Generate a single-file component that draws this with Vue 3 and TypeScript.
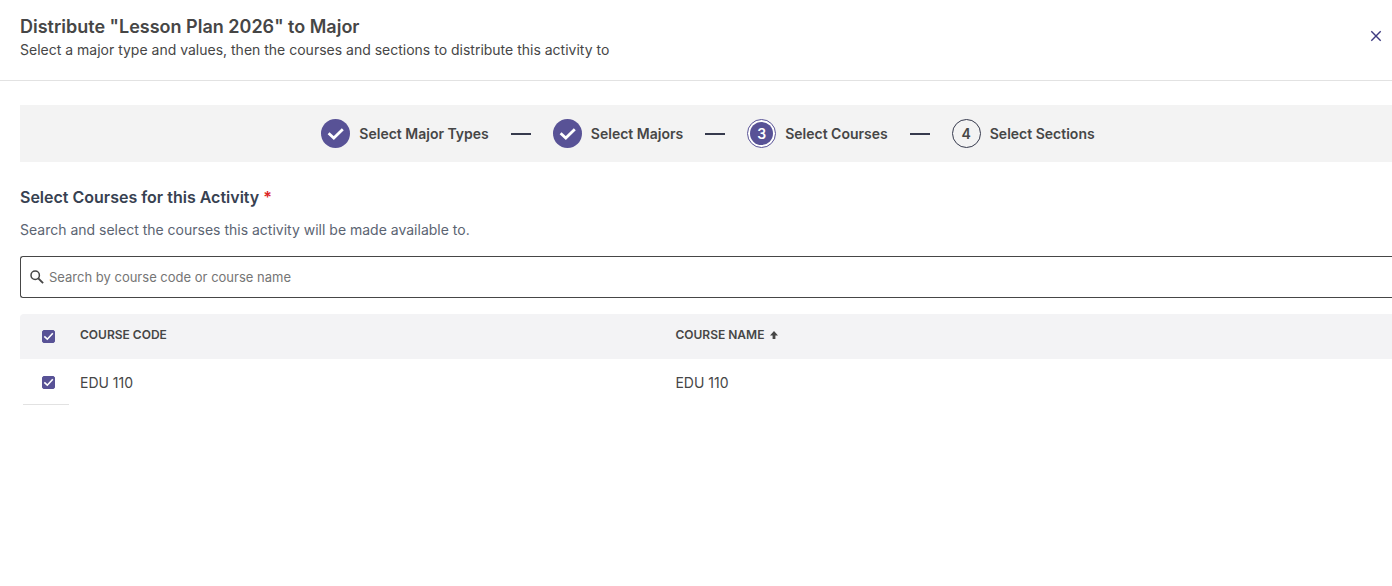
<script setup lang="ts">
import { computed, ref } from 'vue'

type StepState = 'done' | 'current' | 'upcoming'

interface Step {
  label: string
  state: StepState
}

interface Course {
  code: string
  name: string
  selected: boolean
}

const steps: Step[] = [
  { label: 'Select Major Types', state: 'done' },
  { label: 'Select Majors', state: 'done' },
  { label: 'Select Courses', state: 'current' },
  { label: 'Select Sections', state: 'upcoming' },
]

const search = ref('')
const ascending = ref(true)
const courses = ref<Course[]>([{ code: 'EDU 110', name: 'EDU 110', selected: true }])

const visibleCourses = computed(() => {
  const term = search.value.trim().toLowerCase()
  const direction = ascending.value ? 1 : -1
  return courses.value
    .filter((c) => `${c.code} ${c.name}`.toLowerCase().includes(term))
    .sort((a, b) => direction * a.name.localeCompare(b.name))
})

const allSelected = computed({
  get: () => courses.value.every((c) => c.selected),
  set: (value: boolean) => courses.value.forEach((c) => (c.selected = value)),
})
</script>

<template>
  <div class="dialog" role="dialog" aria-labelledby="dialog-title">
    <header class="dialog-header">
      <div>
        <h1 id="dialog-title">Distribute "Lesson Plan 2026" to Major</h1>
        <p>Select a major type and values, then the courses and sections to distribute this activity to</p>
      </div>
      <button class="close" type="button" aria-label="Close">
        <svg viewBox="0 0 12 12" width="12" height="12" aria-hidden="true">
          <path d="M1.3 1.3l9.4 9.4M10.7 1.3l-9.4 9.4" fill="none" stroke="currentColor" stroke-width="1.4" />
        </svg>
      </button>
    </header>

    <main class="content">
      <ol class="stepper">
        <li v-for="(step, index) in steps" :key="step.label" class="step">
          <span class="marker" :class="step.state">
            <svg v-if="step.state === 'done'" viewBox="0 0 29 29" width="29" height="29" aria-hidden="true">
              <path d="M7.6 14.2l5.2 4.8 9-8.8" fill="none" stroke="#fff" stroke-width="2.8" />
            </svg>
            <span v-else class="number">{{ index + 1 }}</span>
          </span>
          <span class="step-label">{{ step.label }}</span>
        </li>
      </ol>

      <h2><label for="course-search">Select Courses for this Activity <span class="required">*</span></label></h2>
      <p class="hint">Search and select the courses this activity will be made available to.</p>

      <div class="search">
        <svg viewBox="0 0 14 14" width="14" height="14" aria-hidden="true">
          <circle cx="5.2" cy="5.2" r="4.2" fill="none" stroke="currentColor" stroke-width="1.5" />
          <path d="M8.3 8.3l4.8 4.8" fill="none" stroke="currentColor" stroke-width="1.9" />
        </svg>
        <input id="course-search" v-model="search" type="text" placeholder="Search by course code or course name" />
      </div>

      <table>
        <thead>
          <tr>
            <th class="select-cell" scope="col">
              <span class="check">
                <input v-model="allSelected" type="checkbox" aria-label="Select all courses" />
                <svg viewBox="0 0 13 13" aria-hidden="true"><path d="M2.3 6.4l3 2.8 5.5-6" /></svg>
              </span>
            </th>
            <th class="code-cell" scope="col">COURSE CODE</th>
            <th scope="col" :aria-sort="ascending ? 'ascending' : 'descending'">
              <button class="sort" type="button" @click="ascending = !ascending">
                COURSE NAME
                <svg :class="{ flipped: !ascending }" viewBox="0 0 8 8" width="8" height="8" aria-hidden="true">
                  <path d="M4 0L8 4.4H5.4V8H2.6V4.4H0z" fill="currentColor" />
                </svg>
              </button>
            </th>
          </tr>
        </thead>
        <tbody>
          <tr v-for="course in visibleCourses" :key="course.code">
            <td class="select-cell">
              <span class="check">
                <input v-model="course.selected" type="checkbox" :aria-label="`Select ${course.code}`" />
                <svg viewBox="0 0 13 13" aria-hidden="true"><path d="M2.3 6.4l3 2.8 5.5-6" /></svg>
              </span>
            </td>
            <td>{{ course.code }}</td>
            <td>{{ course.name }}</td>
          </tr>
        </tbody>
      </table>
    </main>
  </div>
</template>

<style>
body {
  background: #fff;
}
</style>

<style scoped>
.dialog {
  color: #464646;
  font-family: Inter, "Liberation Sans", sans-serif;
  font-size: 14px;
}

h1,
h2,
p,
ol {
  margin: 0;
  padding: 0;
}

button {
  border: 0;
  padding: 0;
  background: none;
  color: inherit;
  font: inherit;
  cursor: pointer;
}

.dialog-header {
  display: flex;
  justify-content: space-between;
  align-items: flex-start;
  padding: 14px 8px 20px 20px;
  border-bottom: 1px solid #e2e2e2;
}

h1 {
  font-size: 18px;
  font-weight: 600;
  line-height: 26px;
}

.dialog-header p {
  line-height: 20px;
}

.close {
  display: grid;
  place-items: center;
  width: 16px;
  height: 16px;
  margin-top: 14px;
  color: #3d3a80;
}

.content {
  padding: 24px 0 24px 20px;
}

.stepper {
  display: flex;
  justify-content: center;
  padding: 14px 0 14px 4px;
  background: #f3f3f3;
  list-style: none;
}

.step {
  display: flex;
  align-items: center;
  font-weight: 600;
}

.step:not(:last-child)::after {
  width: 20px;
  height: 2px;
  margin: 0 22px;
  background: #363a4d;
  content: "";
}

.marker {
  display: grid;
  place-items: center;
  box-sizing: border-box;
  width: 29px;
  height: 29px;
  margin-right: 9px;
  border-radius: 50%;
}

.marker.done {
  background: #585296;
}

.marker.current {
  border: 1px solid #585296;
  background: #fff;
}

.marker.current .number {
  background: #585296;
  color: #fff;
}

.marker.upcoming {
  border: 1px solid #363a4d;
}

.number {
  width: 23px;
  border-radius: 50%;
  line-height: 23px;
  text-align: center;
}

h2 {
  margin-top: 23px;
  color: #374151;
  font-size: 16px;
  font-weight: 600;
  line-height: 24px;
}

.required {
  color: #dc2626;
}

.hint {
  margin-top: 10px;
  color: #5b6472;
  line-height: 22px;
}

.search {
  display: flex;
  align-items: center;
  gap: 5px;
  margin-top: 15px;
  padding-left: 9px;
  border: 1px solid #464646;
  border-right: 0;
  border-radius: 3px 0 0 3px;
}

.search input {
  flex: 1;
  min-width: 0;
  height: 40px;
  border: 0;
  padding: 0;
  outline: 0;
  background: none;
  color: inherit;
  font: inherit;
  font-size: 13px;
}

.search input::placeholder {
  color: #757575;
  opacity: 1;
}

table {
  width: 100%;
  margin-top: 16px;
  border-spacing: 0;
  table-layout: fixed;
}

th,
td {
  box-sizing: border-box;
  padding: 0;
  text-align: left;
}

td {
  height: 46px;
}

th {
  height: 45px;
  padding-bottom: 4px;
  background: #f3f3f5;
  font-size: 12px;
  font-weight: 600;
}

th:first-child {
  border-top-left-radius: 4px;
}

.select-cell {
  width: 60px;
  padding: 0 0 0 22px;
}

td.select-cell {
  background: linear-gradient(#e2e2e2, #e2e2e2) 3px 100% / 46px 1px no-repeat;
}

.code-cell {
  width: 43.4%;
}

.sort {
  display: inline-flex;
  align-items: center;
  gap: 6px;
}

.flipped {
  transform: rotate(180deg);
}

.check {
  display: grid;
  width: 13px;
  height: 13px;
}

.check input,
.check svg {
  grid-area: 1 / 1;
  width: 13px;
  height: 13px;
  margin: 0;
}

.check input {
  appearance: none;
  box-sizing: border-box;
  border: 1px solid #585296;
  border-radius: 2px;
}

.check input:checked {
  background: #585296;
}

.check svg {
  fill: none;
  stroke: #fff;
  stroke-width: 1.6;
  pointer-events: none;
}

.check input:not(:checked) + svg {
  visibility: hidden;
}
</style>
